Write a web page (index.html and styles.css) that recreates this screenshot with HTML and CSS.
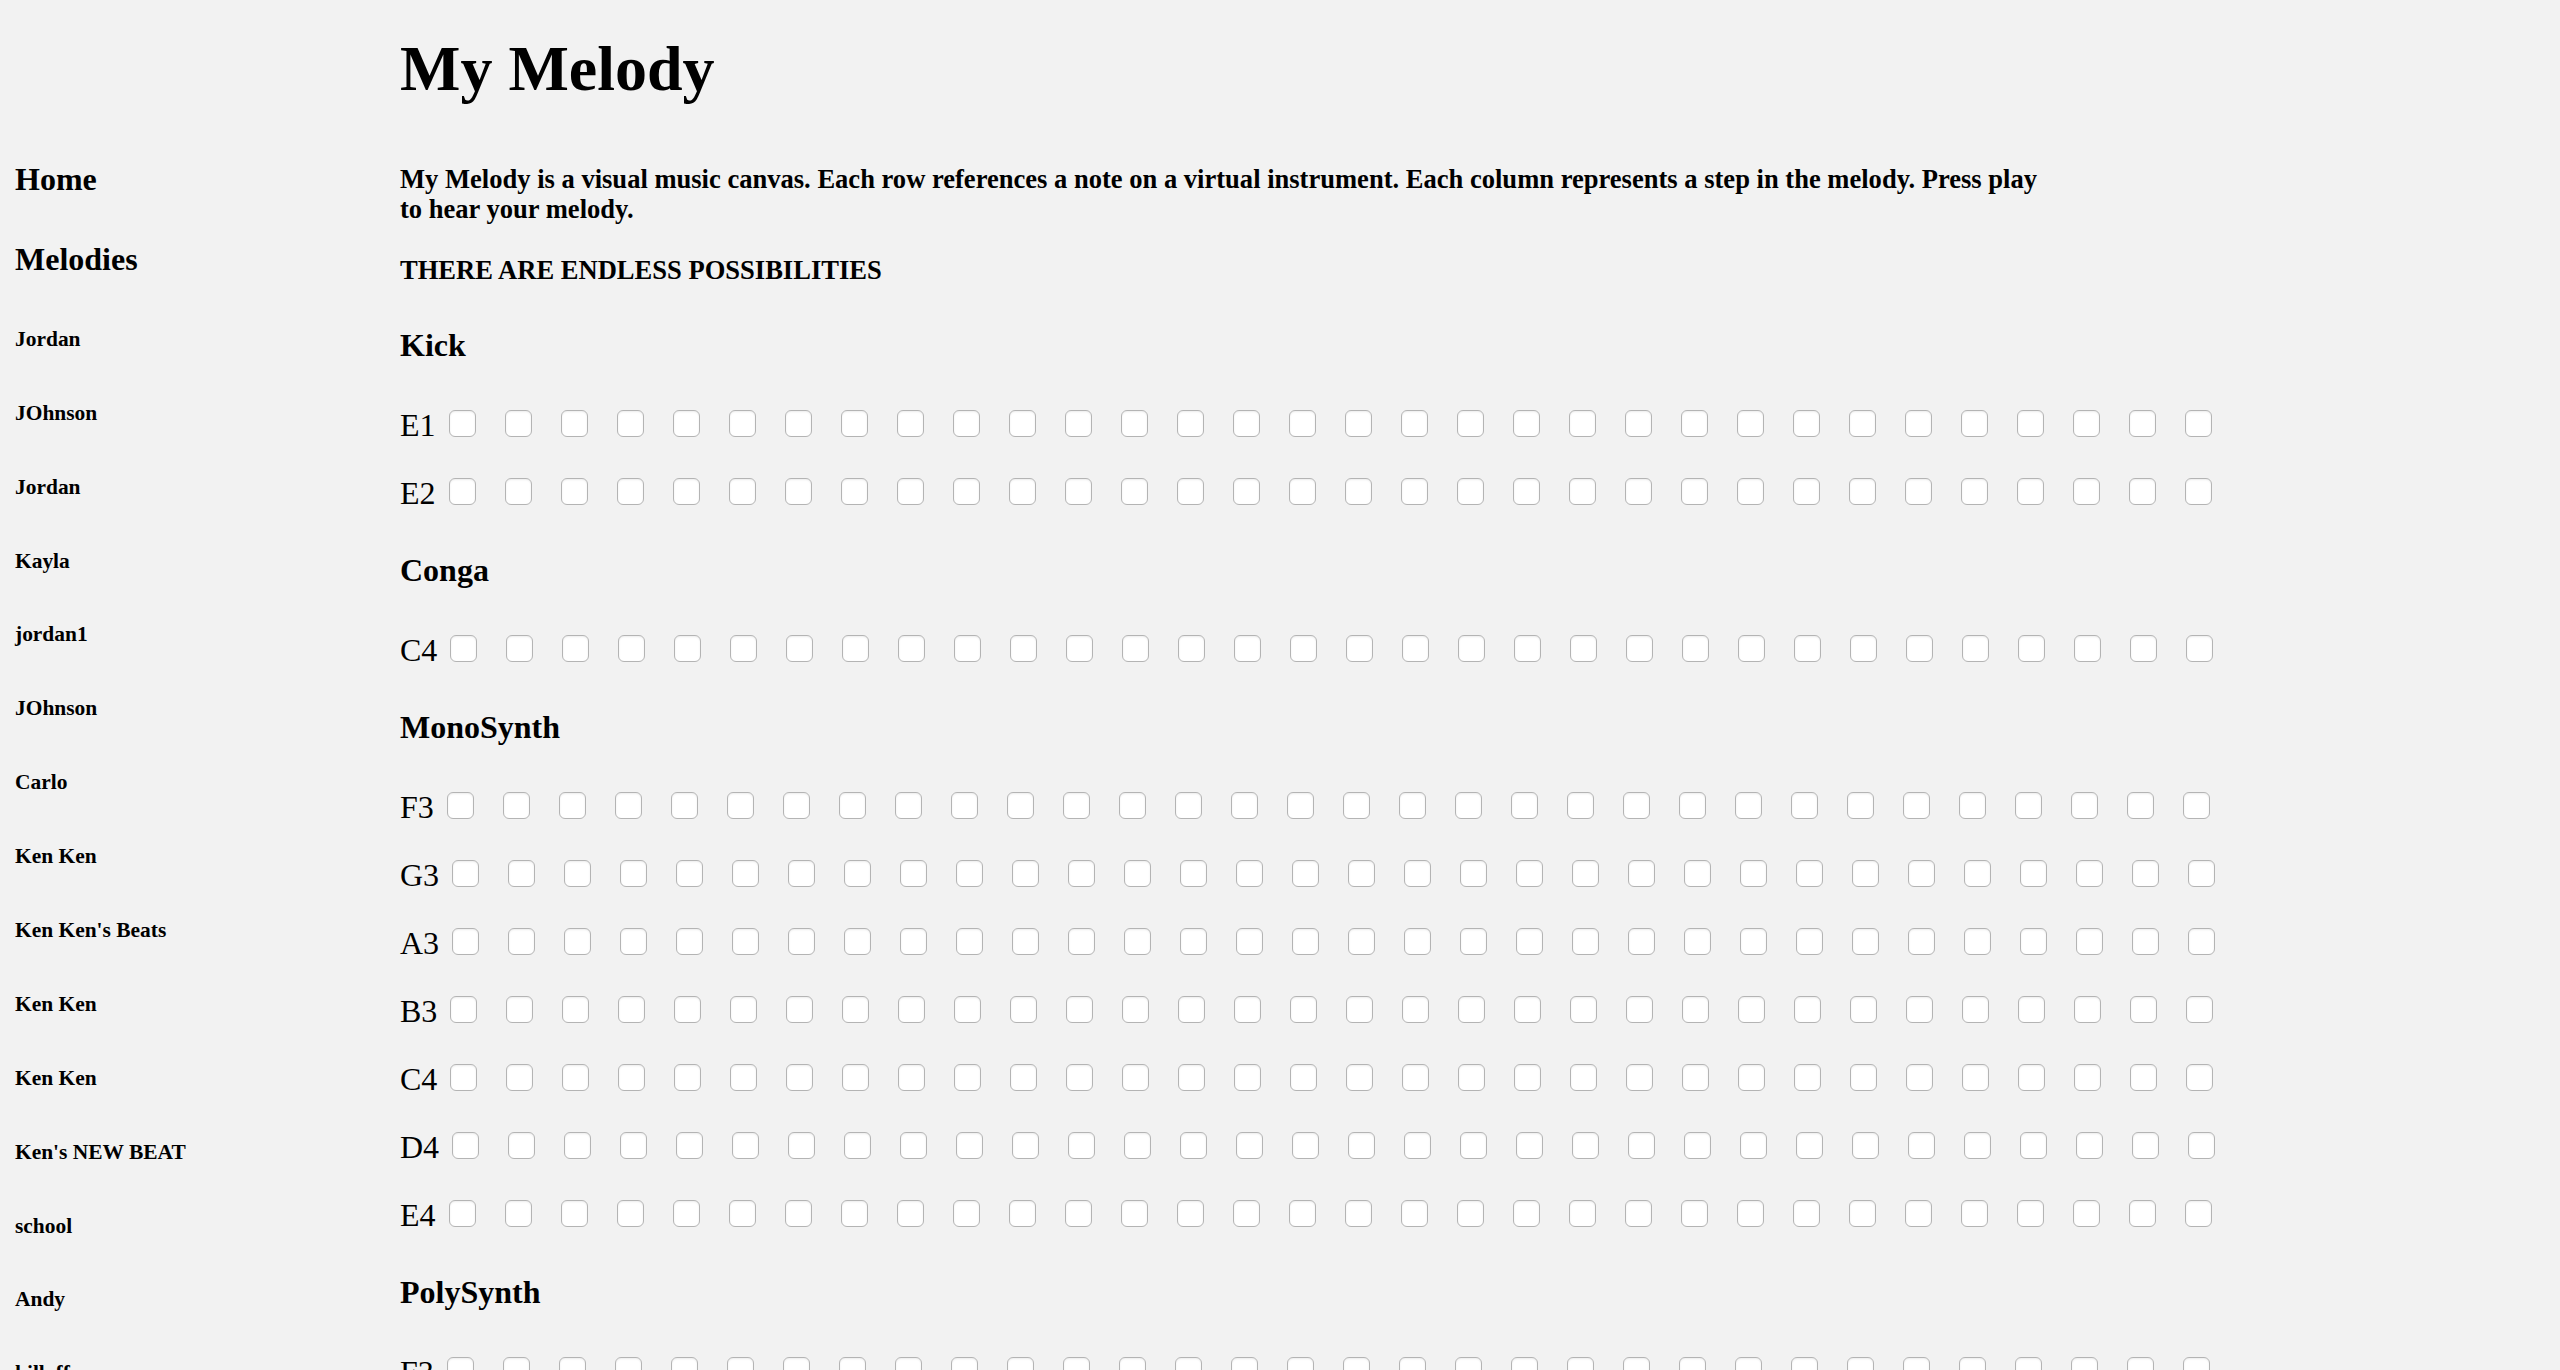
FILE: index.html
```html
<!DOCTYPE html>
<html lang="en">
<head>
<meta charset="utf-8">
<title>My Melody</title>
<link rel="stylesheet" href="styles.css">
</head>
<body>
<header class="masthead">
  <h1 class="title">My Melody</h1>
</header>
<div class="layout">
  <nav class="sidebar">
    <h4 class="nav-main">Home</h4>
    <h4 class="nav-main">Melodies</h4>
    <h6 class="melody-link">Jordan</h6>
    <h6 class="melody-link">JOhnson</h6>
    <h6 class="melody-link">Jordan</h6>
    <h6 class="melody-link">Kayla</h6>
    <h6 class="melody-link">jordan1</h6>
    <h6 class="melody-link">JOhnson</h6>
    <h6 class="melody-link">Carlo</h6>
    <h6 class="melody-link">Ken Ken</h6>
    <h6 class="melody-link">Ken Ken's Beats</h6>
    <h6 class="melody-link">Ken Ken</h6>
    <h6 class="melody-link">Ken Ken</h6>
    <h6 class="melody-link">Ken's NEW BEAT</h6>
    <h6 class="melody-link">school</h6>
    <h6 class="melody-link">Andy</h6>
    <h6 class="melody-link">killoff</h6>
  </nav>
  <main class="canvas">
    <h5 class="lead">My Melody is a visual music canvas. Each row references a note on a virtual instrument. Each column represents a step in the melody. Press play to hear your melody.</h5>
    <h5 class="tagline">THERE ARE ENDLESS POSSIBILITIES</h5>

    <section class="instrument">
      <h4 class="instrument-name">Kick</h4>
      <div class="row"><span class="note">E1</span>
        <input type="checkbox"><input type="checkbox"><input type="checkbox"><input type="checkbox"><input type="checkbox"><input type="checkbox"><input type="checkbox"><input type="checkbox">
        <input type="checkbox"><input type="checkbox"><input type="checkbox"><input type="checkbox"><input type="checkbox"><input type="checkbox"><input type="checkbox"><input type="checkbox">
        <input type="checkbox"><input type="checkbox"><input type="checkbox"><input type="checkbox"><input type="checkbox"><input type="checkbox"><input type="checkbox"><input type="checkbox">
        <input type="checkbox"><input type="checkbox"><input type="checkbox"><input type="checkbox"><input type="checkbox"><input type="checkbox"><input type="checkbox"><input type="checkbox">
      </div>
      <div class="row"><span class="note">E2</span>
        <input type="checkbox"><input type="checkbox"><input type="checkbox"><input type="checkbox"><input type="checkbox"><input type="checkbox"><input type="checkbox"><input type="checkbox">
        <input type="checkbox"><input type="checkbox"><input type="checkbox"><input type="checkbox"><input type="checkbox"><input type="checkbox"><input type="checkbox"><input type="checkbox">
        <input type="checkbox"><input type="checkbox"><input type="checkbox"><input type="checkbox"><input type="checkbox"><input type="checkbox"><input type="checkbox"><input type="checkbox">
        <input type="checkbox"><input type="checkbox"><input type="checkbox"><input type="checkbox"><input type="checkbox"><input type="checkbox"><input type="checkbox"><input type="checkbox">
      </div>
    </section>

    <section class="instrument">
      <h4 class="instrument-name">Conga</h4>
      <div class="row"><span class="note">C4</span>
        <input type="checkbox"><input type="checkbox"><input type="checkbox"><input type="checkbox"><input type="checkbox"><input type="checkbox"><input type="checkbox"><input type="checkbox">
        <input type="checkbox"><input type="checkbox"><input type="checkbox"><input type="checkbox"><input type="checkbox"><input type="checkbox"><input type="checkbox"><input type="checkbox">
        <input type="checkbox"><input type="checkbox"><input type="checkbox"><input type="checkbox"><input type="checkbox"><input type="checkbox"><input type="checkbox"><input type="checkbox">
        <input type="checkbox"><input type="checkbox"><input type="checkbox"><input type="checkbox"><input type="checkbox"><input type="checkbox"><input type="checkbox"><input type="checkbox">
      </div>
    </section>

    <section class="instrument">
      <h4 class="instrument-name">MonoSynth</h4>
      <div class="row"><span class="note">F3</span>
        <input type="checkbox"><input type="checkbox"><input type="checkbox"><input type="checkbox"><input type="checkbox"><input type="checkbox"><input type="checkbox"><input type="checkbox">
        <input type="checkbox"><input type="checkbox"><input type="checkbox"><input type="checkbox"><input type="checkbox"><input type="checkbox"><input type="checkbox"><input type="checkbox">
        <input type="checkbox"><input type="checkbox"><input type="checkbox"><input type="checkbox"><input type="checkbox"><input type="checkbox"><input type="checkbox"><input type="checkbox">
        <input type="checkbox"><input type="checkbox"><input type="checkbox"><input type="checkbox"><input type="checkbox"><input type="checkbox"><input type="checkbox"><input type="checkbox">
      </div>
      <div class="row"><span class="note">G3</span>
        <input type="checkbox"><input type="checkbox"><input type="checkbox"><input type="checkbox"><input type="checkbox"><input type="checkbox"><input type="checkbox"><input type="checkbox">
        <input type="checkbox"><input type="checkbox"><input type="checkbox"><input type="checkbox"><input type="checkbox"><input type="checkbox"><input type="checkbox"><input type="checkbox">
        <input type="checkbox"><input type="checkbox"><input type="checkbox"><input type="checkbox"><input type="checkbox"><input type="checkbox"><input type="checkbox"><input type="checkbox">
        <input type="checkbox"><input type="checkbox"><input type="checkbox"><input type="checkbox"><input type="checkbox"><input type="checkbox"><input type="checkbox"><input type="checkbox">
      </div>
      <div class="row"><span class="note">A3</span>
        <input type="checkbox"><input type="checkbox"><input type="checkbox"><input type="checkbox"><input type="checkbox"><input type="checkbox"><input type="checkbox"><input type="checkbox">
        <input type="checkbox"><input type="checkbox"><input type="checkbox"><input type="checkbox"><input type="checkbox"><input type="checkbox"><input type="checkbox"><input type="checkbox">
        <input type="checkbox"><input type="checkbox"><input type="checkbox"><input type="checkbox"><input type="checkbox"><input type="checkbox"><input type="checkbox"><input type="checkbox">
        <input type="checkbox"><input type="checkbox"><input type="checkbox"><input type="checkbox"><input type="checkbox"><input type="checkbox"><input type="checkbox"><input type="checkbox">
      </div>
      <div class="row"><span class="note">B3</span>
        <input type="checkbox"><input type="checkbox"><input type="checkbox"><input type="checkbox"><input type="checkbox"><input type="checkbox"><input type="checkbox"><input type="checkbox">
        <input type="checkbox"><input type="checkbox"><input type="checkbox"><input type="checkbox"><input type="checkbox"><input type="checkbox"><input type="checkbox"><input type="checkbox">
        <input type="checkbox"><input type="checkbox"><input type="checkbox"><input type="checkbox"><input type="checkbox"><input type="checkbox"><input type="checkbox"><input type="checkbox">
        <input type="checkbox"><input type="checkbox"><input type="checkbox"><input type="checkbox"><input type="checkbox"><input type="checkbox"><input type="checkbox"><input type="checkbox">
      </div>
      <div class="row"><span class="note">C4</span>
        <input type="checkbox"><input type="checkbox"><input type="checkbox"><input type="checkbox"><input type="checkbox"><input type="checkbox"><input type="checkbox"><input type="checkbox">
        <input type="checkbox"><input type="checkbox"><input type="checkbox"><input type="checkbox"><input type="checkbox"><input type="checkbox"><input type="checkbox"><input type="checkbox">
        <input type="checkbox"><input type="checkbox"><input type="checkbox"><input type="checkbox"><input type="checkbox"><input type="checkbox"><input type="checkbox"><input type="checkbox">
        <input type="checkbox"><input type="checkbox"><input type="checkbox"><input type="checkbox"><input type="checkbox"><input type="checkbox"><input type="checkbox"><input type="checkbox">
      </div>
      <div class="row"><span class="note">D4</span>
        <input type="checkbox"><input type="checkbox"><input type="checkbox"><input type="checkbox"><input type="checkbox"><input type="checkbox"><input type="checkbox"><input type="checkbox">
        <input type="checkbox"><input type="checkbox"><input type="checkbox"><input type="checkbox"><input type="checkbox"><input type="checkbox"><input type="checkbox"><input type="checkbox">
        <input type="checkbox"><input type="checkbox"><input type="checkbox"><input type="checkbox"><input type="checkbox"><input type="checkbox"><input type="checkbox"><input type="checkbox">
        <input type="checkbox"><input type="checkbox"><input type="checkbox"><input type="checkbox"><input type="checkbox"><input type="checkbox"><input type="checkbox"><input type="checkbox">
      </div>
      <div class="row"><span class="note">E4</span>
        <input type="checkbox"><input type="checkbox"><input type="checkbox"><input type="checkbox"><input type="checkbox"><input type="checkbox"><input type="checkbox"><input type="checkbox">
        <input type="checkbox"><input type="checkbox"><input type="checkbox"><input type="checkbox"><input type="checkbox"><input type="checkbox"><input type="checkbox"><input type="checkbox">
        <input type="checkbox"><input type="checkbox"><input type="checkbox"><input type="checkbox"><input type="checkbox"><input type="checkbox"><input type="checkbox"><input type="checkbox">
        <input type="checkbox"><input type="checkbox"><input type="checkbox"><input type="checkbox"><input type="checkbox"><input type="checkbox"><input type="checkbox"><input type="checkbox">
      </div>
    </section>

    <section class="instrument">
      <h4 class="instrument-name">PolySynth</h4>
      <div class="row"><span class="note">F3</span>
        <input type="checkbox"><input type="checkbox"><input type="checkbox"><input type="checkbox"><input type="checkbox"><input type="checkbox"><input type="checkbox"><input type="checkbox">
        <input type="checkbox"><input type="checkbox"><input type="checkbox"><input type="checkbox"><input type="checkbox"><input type="checkbox"><input type="checkbox"><input type="checkbox">
        <input type="checkbox"><input type="checkbox"><input type="checkbox"><input type="checkbox"><input type="checkbox"><input type="checkbox"><input type="checkbox"><input type="checkbox">
        <input type="checkbox"><input type="checkbox"><input type="checkbox"><input type="checkbox"><input type="checkbox"><input type="checkbox"><input type="checkbox"><input type="checkbox">
      </div>
      <div class="row"><span class="note">G3</span>
        <input type="checkbox"><input type="checkbox"><input type="checkbox"><input type="checkbox"><input type="checkbox"><input type="checkbox"><input type="checkbox"><input type="checkbox">
        <input type="checkbox"><input type="checkbox"><input type="checkbox"><input type="checkbox"><input type="checkbox"><input type="checkbox"><input type="checkbox"><input type="checkbox">
        <input type="checkbox"><input type="checkbox"><input type="checkbox"><input type="checkbox"><input type="checkbox"><input type="checkbox"><input type="checkbox"><input type="checkbox">
        <input type="checkbox"><input type="checkbox"><input type="checkbox"><input type="checkbox"><input type="checkbox"><input type="checkbox"><input type="checkbox"><input type="checkbox">
      </div>
    </section>
  </main>
</div>
</body>
</html>
```

FILE: styles.css
```css
html, body {
  background: #f2f2f2;
}

body {
  margin: 0;
  padding: 0 15px;
  color: #000;
  font-family: "Liberation Serif", "Times New Roman", serif;
}

.masthead {
  padding-left: 385px;
}

.title {
  margin: 32px 0 0;
  font-size: 64px;
  line-height: 74px;
  font-weight: bold;
}

.layout {
  display: grid;
  grid-template-columns: 385px 1fr;
  margin-top: 13px;
}

.sidebar {
  min-width: 0;
}

.nav-main {
  margin: 42px 0 44px;
  font-size: 32px;
  line-height: 36px;
  font-weight: bold;
}

.melody-link {
  margin: 49.9px 0;
  font-size: 21.44px;
  line-height: 24px;
  font-weight: bold;
}

.canvas {
  min-width: 0;
}

.lead {
  max-width: 1650px;
  margin: 45px 0 29px;
  font-size: 26.56px;
  line-height: 30px;
  font-weight: bold;
}

.tagline {
  margin: 30.5px 0 42.5px;
  font-size: 26.56px;
  line-height: 30px;
  font-weight: bold;
}

.instrument-name {
  margin: 41px 0 44px;
  font-size: 32px;
  line-height: 36px;
  font-weight: bold;
}

.row {
  margin: 32px 0;
  font-size: 0;
  line-height: 0;
  white-space: nowrap;
}

.note {
  font-size: 32px;
  line-height: 36px;
  font-weight: normal;
}

.row input {
  -webkit-appearance: none;
  appearance: none;
  box-sizing: border-box;
  display: inline-block;
  width: 27px;
  height: 27px;
  margin: 0 16px 0 13px;
  vertical-align: -1px;
  border: 1.5px solid #b4b4b4;
  border-radius: 6px;
  background: #fff;
  box-shadow: inset 0 1px 2px rgba(0, 0, 0, 0.08);
}
```
